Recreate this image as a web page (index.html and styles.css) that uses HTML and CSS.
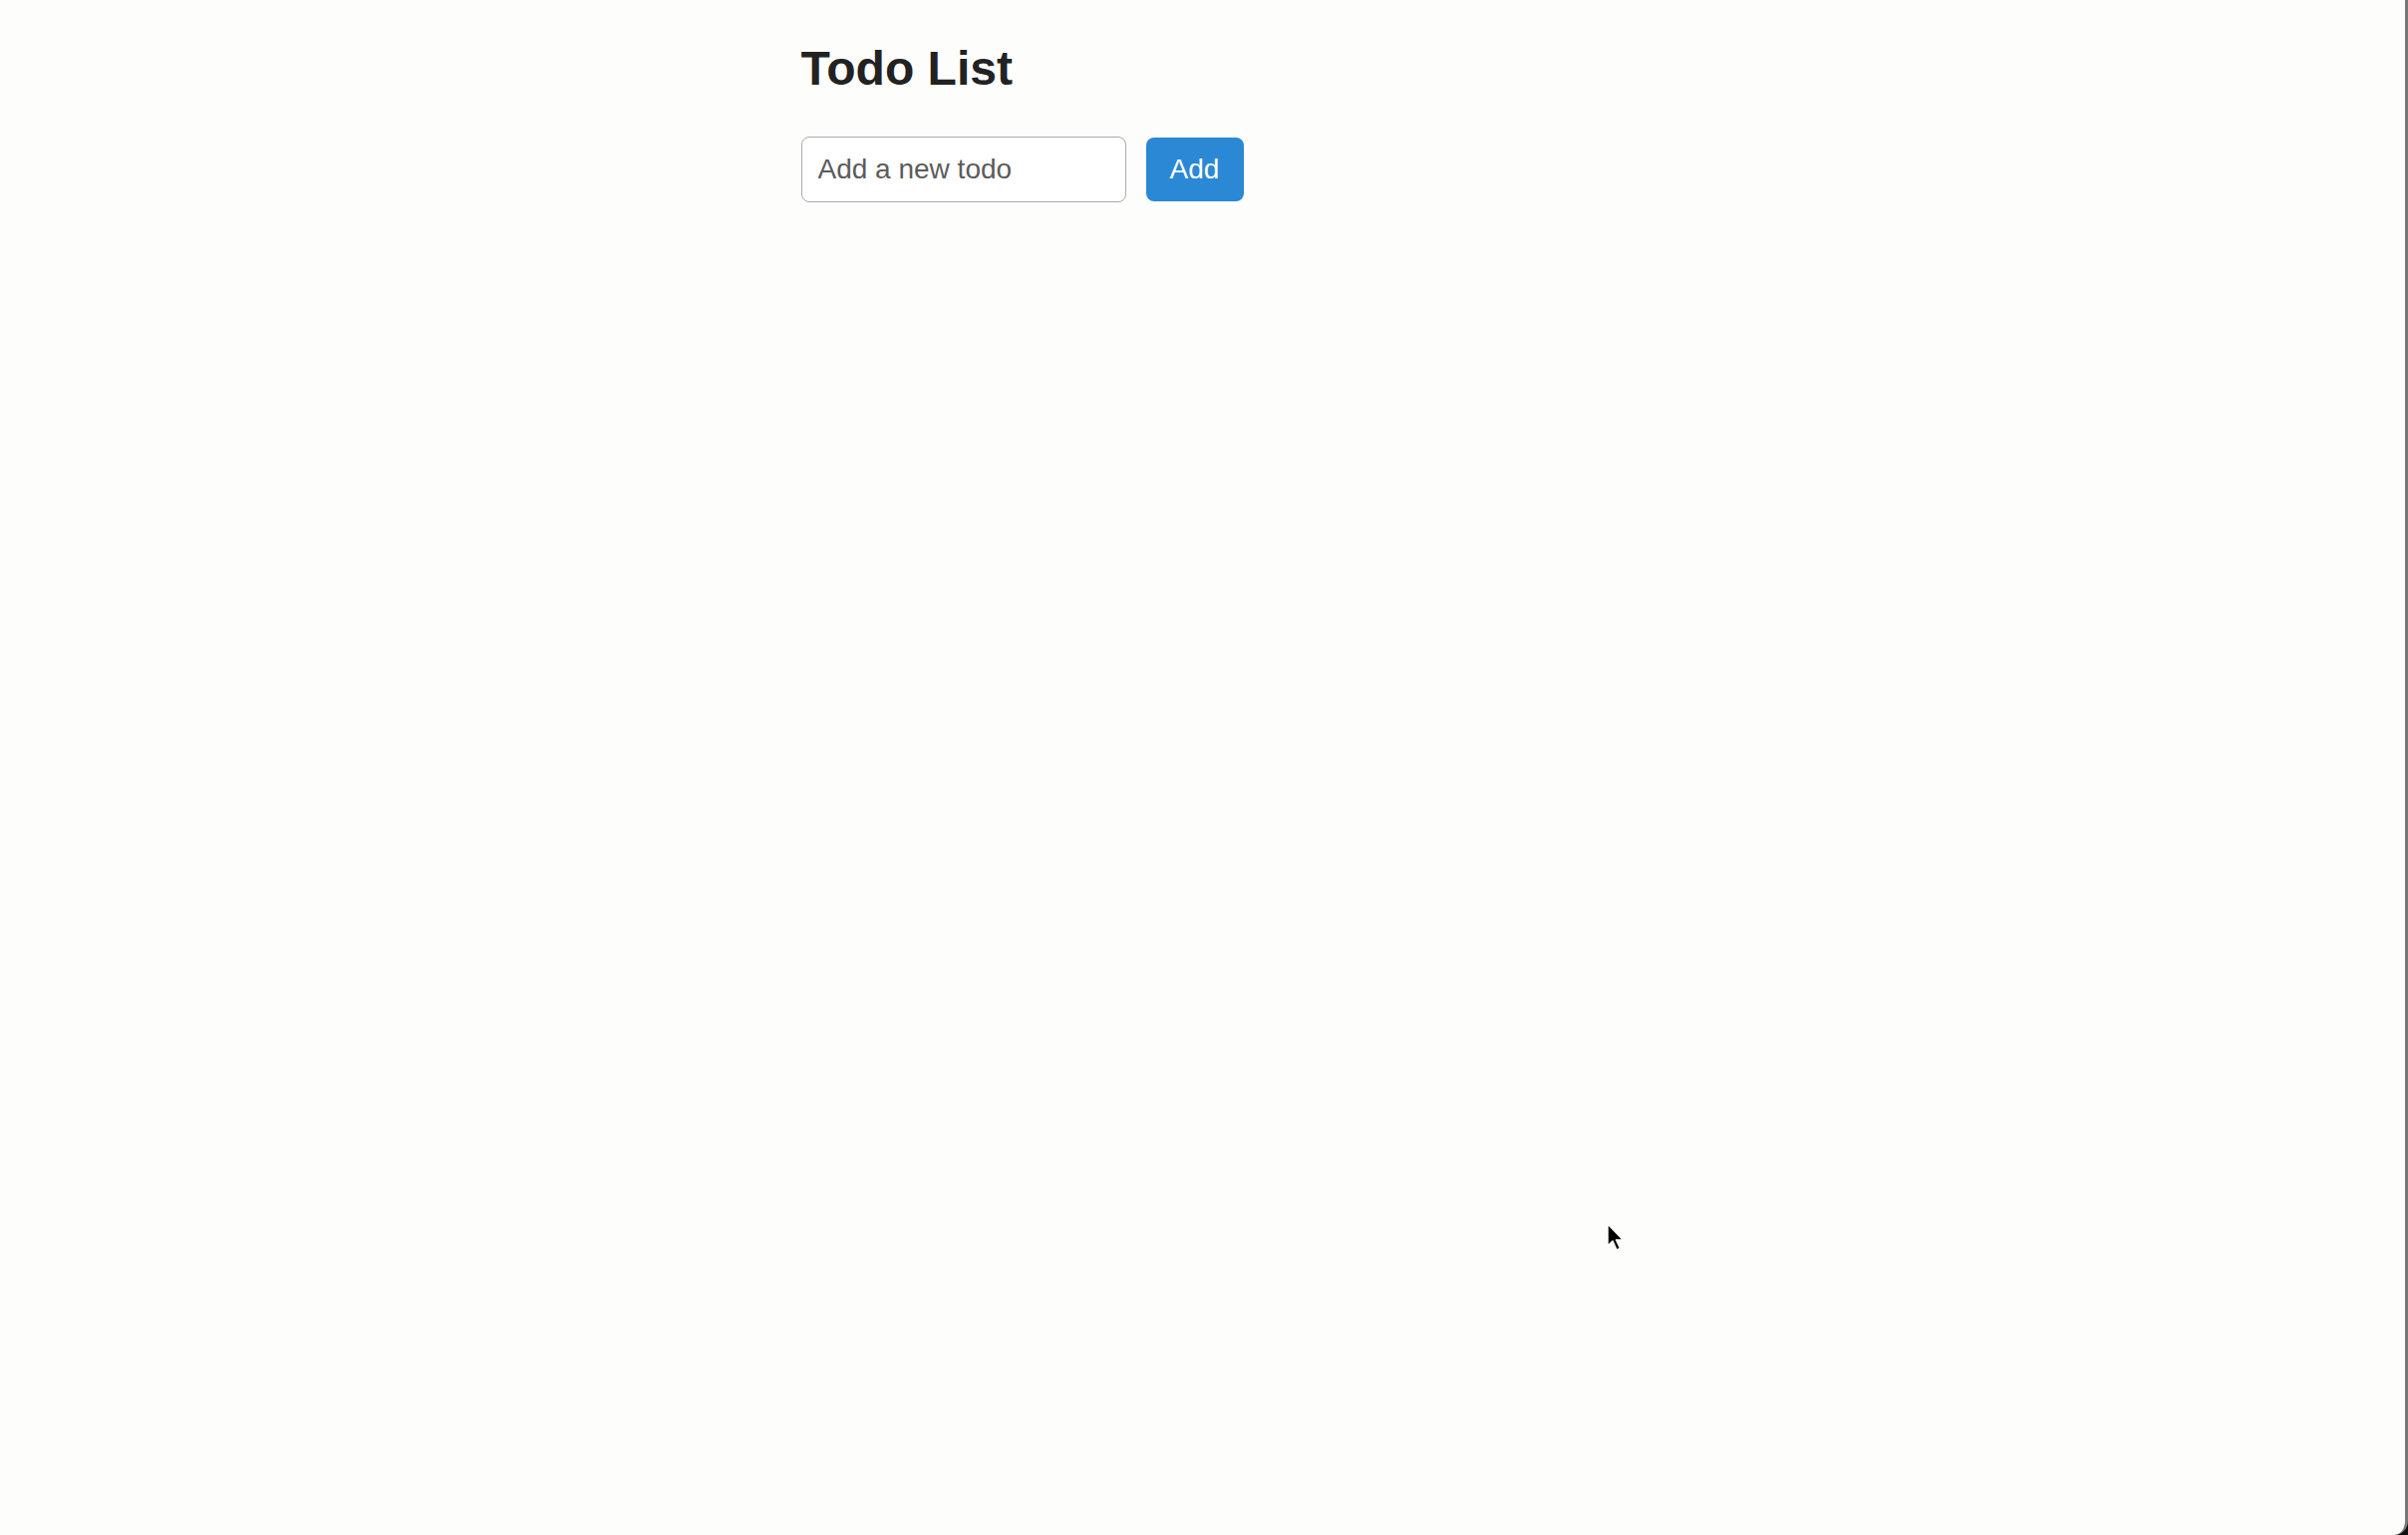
FILE: index.html
```html
<!DOCTYPE html>
<html lang="en">

<head>
    <meta charset="UTF-8">
    <meta name="viewport" content="width=device-width, initial-scale=1.0">
    <title>Todo List</title>
    <link rel="stylesheet" href="styles.css">
</head>

<body>

    <main class="app">
        <h1 class="title">Todo List</h1>
        <form class="todo-form" onsubmit="return false;">
            <input type="text" class="todo-input" placeholder="Add a new todo">
            <button type="submit" class="add-btn">Add</button>
        </form>
        <ul class="todo-list"></ul>
    </main>

    <!-- mouse pointer from the capture -->
    <svg class="cursor" width="20" height="30" viewBox="0 0 20 30">
        <path d="M2 1 L2 23 L7 18 L11 27 L14.5 25.5 L10.5 17 L17.5 17 Z" fill="#000" stroke="#fff" stroke-width="1.5" stroke-linejoin="round"/>
    </svg>

</body>

</html>
```

FILE: styles.css
```css
html {
    background-color: #111;
}

body {
    font-family: 'Liberation Sans', Arial, sans-serif;
    margin: 0;
    min-height: 100vh;
    box-sizing: border-box;
    background-color: #fdfdfc;
    border-right: 3px solid #777;
    border-bottom-right-radius: 14px;
    color: #222;
}

.app {
    width: 806px;
    margin: 0 auto;
    padding-top: 42px;
}

.title {
    margin: 0 0 41px;
    font-size: 48px;
    font-weight: bold;
    line-height: 1.117;
    color: #222;
}

.todo-form {
    display: flex;
    align-items: center;
    gap: 20px;
}

.todo-input {
    width: 326px;
    height: 66px;
    box-sizing: border-box;
    padding: 0 16px;
    font-family: 'Liberation Sans', Arial, sans-serif;
    font-size: 28px;
    color: #333;
    background-color: #fff;
    border: 1.5px solid #aaa;
    border-radius: 8px;
    outline: none;
}

.todo-input::placeholder {
    color: #5c5c5c;
}

.add-btn {
    width: 98px;
    height: 64px;
    font-family: 'Liberation Sans', Arial, sans-serif;
    font-size: 28px;
    color: #fff;
    background-color: #2a88d4;
    border: none;
    border-radius: 8px;
    cursor: pointer;
}

.todo-list {
    list-style-type: none;
    padding: 0;
}

.cursor {
    position: absolute;
    left: 1611px;
    top: 1227px;
}
```
